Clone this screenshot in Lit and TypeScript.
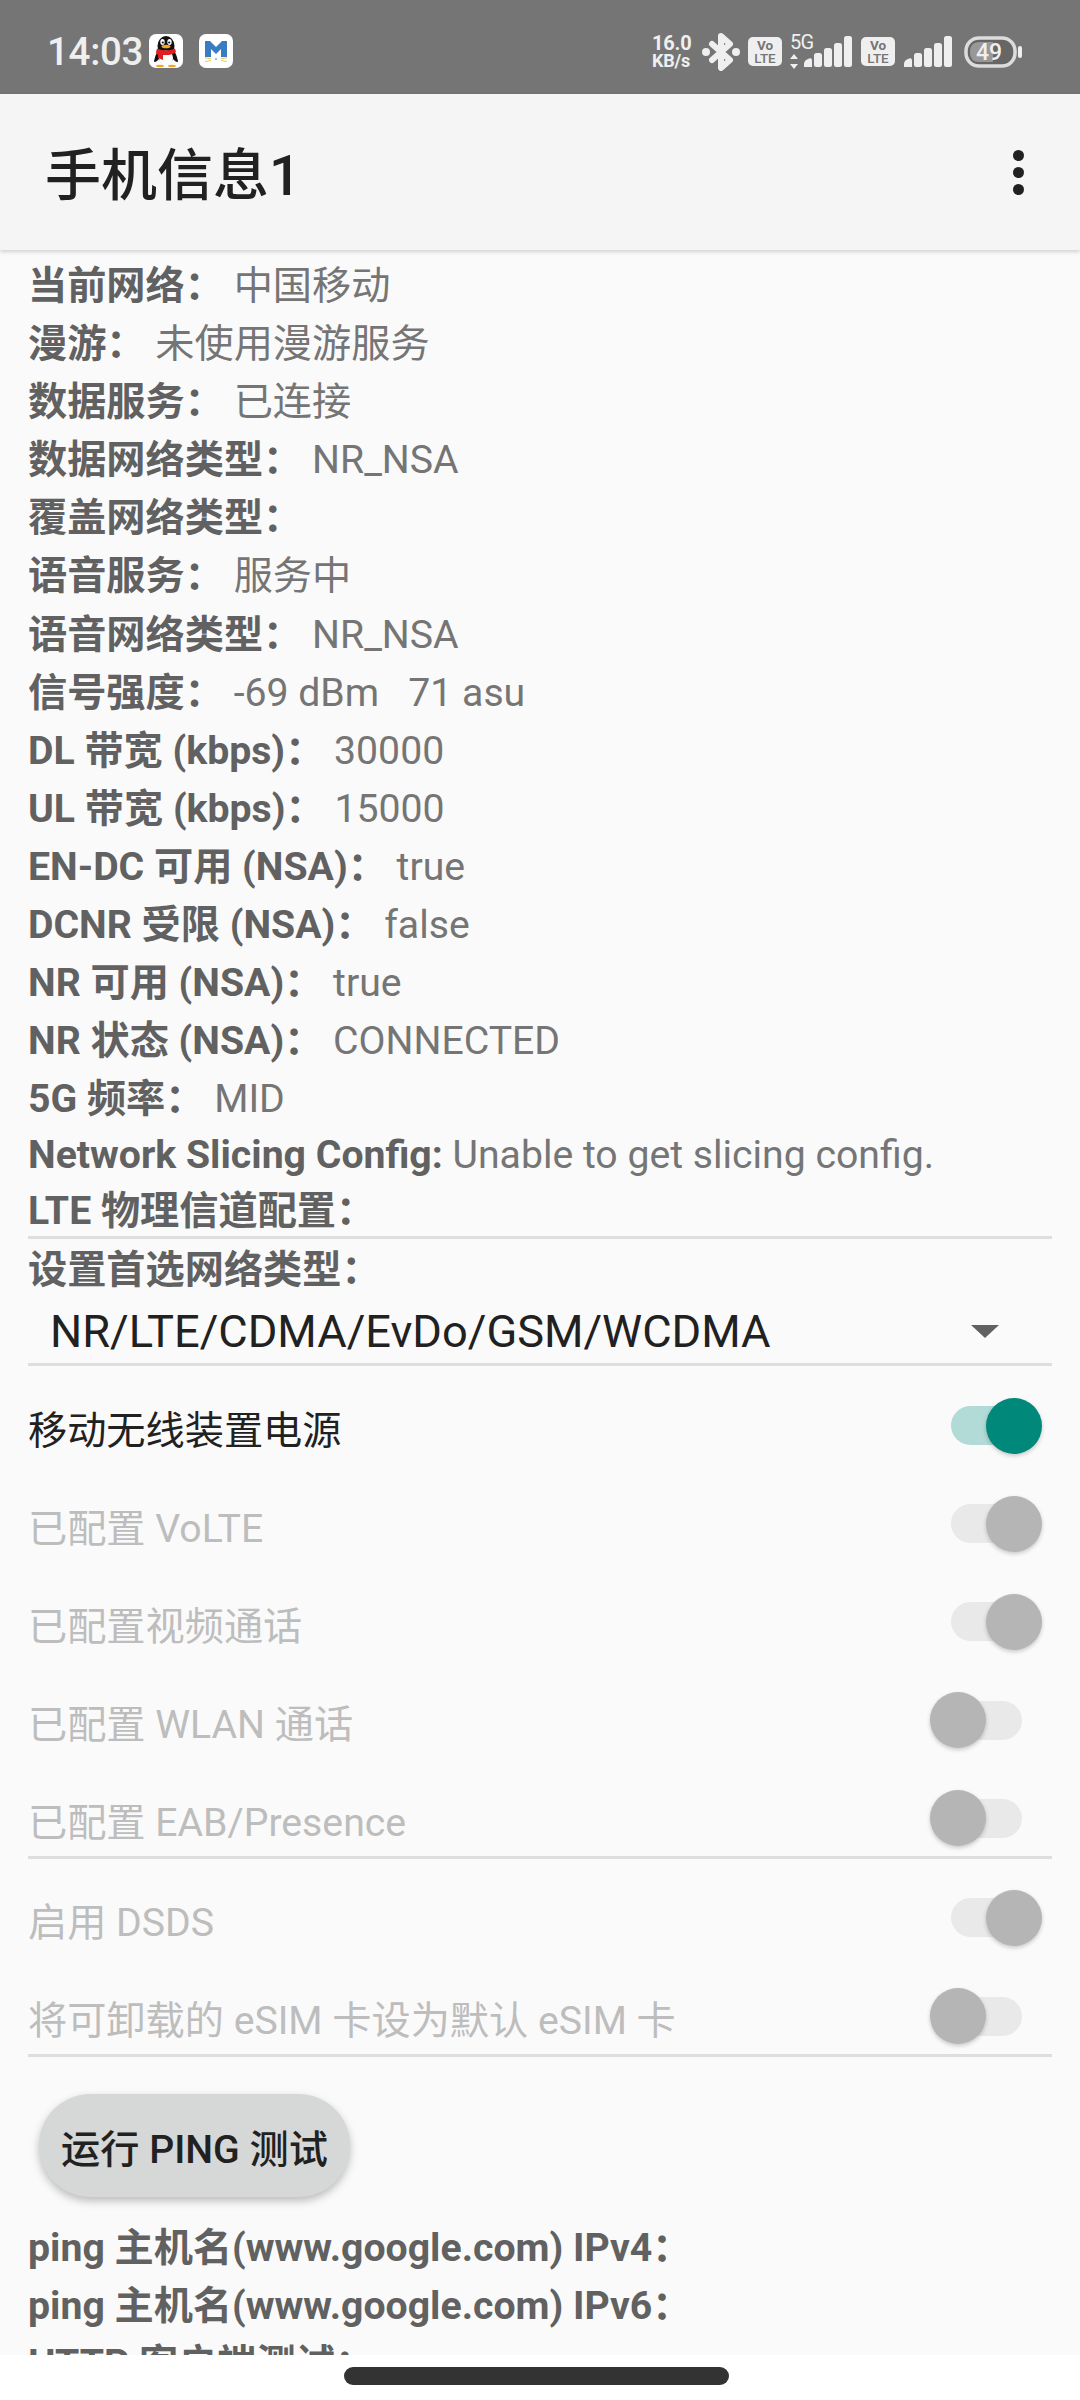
import { LitElement, html, css, svg } from "lit";
import { customElement } from "lit/decorators.js";

const INFO: [string, string][] = [
  ["当前网络：", "中国移动"],
  ["漫游：", "未使用漫游服务"],
  ["数据服务：", "已连接"],
  ["数据网络类型：", "NR_NSA"],
  ["覆盖网络类型：", ""],
  ["语音服务：", "服务中"],
  ["语音网络类型：", "NR_NSA"],
  ["信号强度：", "-69 dBm   71 asu"],
  ["DL 带宽 (kbps)：", "30000"],
  ["UL 带宽 (kbps)：", "15000"],
  ["EN-DC 可用 (NSA)：", "true"],
  ["DCNR 受限 (NSA)：", "false"],
  ["NR 可用 (NSA)：", "true"],
  ["NR 状态 (NSA)：", "CONNECTED"],
  ["5G 频率：", "MID"],
];

const volte = html`<svg class="volte" width="34" height="29" viewBox="0 0 34 29">
  <rect width="34" height="29" rx="5" fill="#efefef"></rect>
  <text x="17" y="13" text-anchor="middle" font-size="13.500" font-weight="700" fill="#757575" font-family="Roboto">Vo</text>
  <text x="17" y="26" text-anchor="middle" font-size="13.500" font-weight="500" fill="#757575" font-family="Roboto">LTE</text>
</svg>`;

const bars = svg`
  <path d="M0 31v-3q0-3 3-4.500l2-1q3-1 3 2v6.500z" fill="#efefef"></path>
  <rect x="10" y="17" width="8" height="14" rx="2.500" fill="#efefef"></rect>
  <rect x="20" y="12" width="8" height="19" rx="2.500" fill="#efefef"></rect>
  <rect x="30" y="7" width="8" height="24" rx="2.500" fill="#efefef"></rect>
  <rect x="40" y="0" width="8" height="31" rx="2.500" fill="#efefef"></rect>`;

@customElement("app-root")
export class AppRoot extends LitElement {
  static styles = css`
    :host {
      display: block;
      width: 1080px;
      height: 2400px;
      overflow: hidden;
      background: #fafafa;
      font-family: Roboto, "Noto Sans CJK SC", sans-serif;
    }
    .page { display: flex; flex-direction: column; height: 2400px; }
    .status {
      height: 94px;
      flex: none;
      background: #757575;
      display: flex;
      align-items: center;
      padding-left: 47px;
      color: #efefef;
    }
    .time { font-size: 38.5px; font-weight: 500; width: 102px; line-height: 1; letter-spacing: -.3px; margin-top: 10px; }
    .app { display: block; margin-top: 8px; }
    .app.m { margin-left: 16px; }
    .cluster { margin-left: auto; display: flex; align-items: center; margin-right: 58px; margin-top: 9px; }
    .speed { width: 44px; margin-right: 6px; display: flex; flex-direction: column; align-items: flex-start; font-weight: 700; }
    .speed .a { font-size: 20px; height: 18px; line-height: 18px; letter-spacing: -.2px; }
    .speed .b { font-size: 18px; height: 18px; line-height: 18px; letter-spacing: -.2px; }
    .bt { margin-right: 8px; }
    .g5 { margin-left: 8px; margin-right: -12px; }
    .sig.two { margin-left: 9px; }
    .vwrap { display: flex; margin-left: 9px; }
    .batt { margin-left: 12px; }
    .bar {
      height: 156px;
      flex: none;
      background: #f5f5f5;
      box-shadow: 0 2px 4px rgba(0, 0, 0, .16);
      display: flex;
      align-items: center;
      justify-content: space-between;
      padding: 0 56px 0 45px;
      color: #212121;
      position: relative;
      z-index: 1;
    }
    .title { font-size: 56px; line-height: 1; font-weight: 500; margin-top: 8px; }
    .dots { display: flex; flex-direction: column; gap: 6px; }
    .dots i { width: 11px; height: 11px; border-radius: 50%; background: #212121; display: block; }
    .content { flex: 1; min-height: 0; overflow: hidden; padding: 7px 28px 0 28px; }
    .row { font-size: 39.2px; line-height: 58.1px; height: 58.1px; color: #757575; white-space: pre; }
    .row b { font-weight: 700; color: #616161; }
    .row.slice { height: 54px; line-height: 54px; }
    .row.label { font-weight: 700; color: #616161; }
    .row.lte { height: 53.5px; }
    .row.pref { height: 58px; line-height: 62px; }
    .divider { height: 3px; background: #dedede; }
    .spinner { height: 62px; padding: 4px 53px 0 22px; display: flex; align-items: center; justify-content: space-between; font-size: 45.2px; color: #212121; }
    .t {
      height: 98.2px;
      display: flex;
      align-items: center;
      justify-content: space-between;
      font-size: 39.2px;
      color: #bdbdbd;
    }
    .t.on { color: #212121; }
    .t span { margin-top: 2px; }
    .first { margin-top: 10.5px; }
    .tight { margin-bottom: -11.5px; }
    .after { margin-top: 10px; }
    .sw { width: 113px; height: 56px; display: flex; align-items: center; margin-right: 10px; flex: none; }
    .sw .track { width: 71px; height: 39px; border-radius: 20px; background: #e9e9e9; margin-left: 22px; flex: none; }
    .sw .thumb { width: 56px; height: 56px; border-radius: 50%; background: #b5b5b5; margin-left: -92px; flex: none; box-shadow: 0 2px 4px rgba(0, 0, 0, .2); position: relative; }
    .sw.right .thumb { margin-left: -36px; }
    .t.on .track { background: #b2dad6; }
    .t.on .thumb { background: #00897b; }
    .btn {
      margin: 37.5px 0 21.5px 11px;
      width: 311px;
      height: 103px;
      border-radius: 52px;
      background: #d6d7d7;
      box-shadow: 0 4px 8px rgba(0, 0, 0, .25);
      display: flex;
      align-items: center;
      justify-content: center;
      font-size: 39.2px;
      font-weight: 500;
      color: #212121;
    }
    .nav { height: 45px; flex: none; background: #fff; padding: 12px 0 0 344px; box-sizing: border-box; }
    .pill { width: 385px; height: 18px; border-radius: 9px; background: #333; }
  `;

  private toggle(label: string, right: boolean, cls = "") {
    return html`<div class="t ${cls}">
      <span>${label}</span>
      <div class="sw ${right ? "right" : ""}"><div class="track"></div><div class="thumb"></div></div>
    </div>`;
  }

  render() {
    return html`<div class="page">
      <div class="status">
        <div class="time">14:03</div>
        <svg class="app" width="34" height="34" viewBox="0 0 34 34">
          <rect width="34" height="34" rx="7" fill="#fff"></rect>
          <ellipse cx="17" cy="12" rx="8.500" ry="10" fill="#111"></ellipse>
          <path d="M9 16q-3 6-4 11 0 2 3 0l2-2q2 6 7 6t7-6l2 2q3 2 3 0-1-5-4-11z" fill="#111"></path>
          <ellipse cx="17" cy="24" rx="7" ry="7.500" fill="#fff"></ellipse>
          <path d="M8 14.500q9 4 18 0l1 3.500q-3 2.500-7 3H14v5l-5-2v-3q-2-1-2-3z" fill="#e02020"></path>
          <ellipse cx="13.500" cy="8" rx="2.200" ry="3" fill="#fff"></ellipse>
          <ellipse cx="20.500" cy="8" rx="2.200" ry="3" fill="#fff"></ellipse>
          <circle cx="13.800" cy="8.500" r="1.100" fill="#111"></circle>
          <circle cx="20.200" cy="8.500" r="1.100" fill="#111"></circle>
          <ellipse cx="17" cy="12.500" rx="4.500" ry="1.800" fill="#f5a623"></ellipse>
          <ellipse cx="11" cy="32" rx="4" ry="1.200" fill="#f5a623"></ellipse>
          <ellipse cx="23" cy="32" rx="4" ry="1.200" fill="#f5a623"></ellipse>
        </svg>
        <svg class="app m" width="34" height="34" viewBox="0 0 34 34">
          <rect width="34" height="34" rx="7" fill="#fff"></rect>
          <path d="M6 7h5l6 6 6-6h5v16h-6v-8l-5 5-5-5v8H6z" fill="#3a7cc4"></path>
          <path d="M6 24l6 .5M6 27.500l6-1M22 24.500l6-.5M22 26.500l6 1" stroke="#e8c860" stroke-width="1"></path>
          <circle cx="17" cy="25" r="1" fill="#8fa8d0"></circle>
        </svg>
        <div class="cluster">
          <div class="speed"><span class="a">16.0</span><span class="b">KB/s</span></div>
          <svg class="bt" width="38" height="38" viewBox="0 0 38 38">
            <path d="M10 11l18 16-9 8V3l9 8-18 16" fill="none" stroke="#efefef" stroke-width="6" stroke-linejoin="round" stroke-linecap="round"></path>
            <circle cx="4" cy="19" r="4" fill="#efefef"></circle>
            <circle cx="34" cy="19" r="4" fill="#efefef"></circle>
          </svg>
          ${volte}
          <svg class="g5" width="26" height="36" viewBox="0 0 26 36">
            <text x="0" y="15" font-size="20" fill="#efefef" font-family="Roboto" textLength="24">5G</text>
            <path d="M4 20l4 5H0zM4 35l4-5H0z" fill="#efefef"></path>
          </svg>
          <svg class="sig" width="48" height="31" viewBox="0 0 48 31">${bars}</svg>
          <span class="vwrap">${volte}</span>
          <svg class="sig two" width="48" height="31" viewBox="0 0 48 31">${bars}</svg>
          <svg class="batt" width="58" height="32" viewBox="0 0 58 32">
            <rect x="2" y="2" width="49" height="28" rx="13" fill="#666" stroke="#dcdcdc" stroke-width="3.500"></rect>
            <path d="M6 16q0-10 9-10h14v20H15q-9 0-9-10z" fill="#989898"></path>
            <rect x="54" y="10" width="4" height="12" rx="2" fill="#efefef"></rect>
            <text x="25" y="24" text-anchor="middle" font-size="23" font-weight="500" fill="#efefef" font-family="Roboto">49</text>
          </svg>
        </div>
      </div>
      <div class="bar">
        <div class="title">手机信息1</div>
        <div class="dots"><i></i><i></i><i></i></div>
      </div>
      <div class="content">
        ${INFO.map(([k, v]) => html`<div class="row"><b>${k}</b> ${v}</div>`)}
        <div class="row slice"><b>Network Slicing Config:</b> Unable to get slicing config.</div>
        <div class="row label lte">LTE 物理信道配置：</div>
        <div class="divider"></div>
        <div class="row label pref">设置首选网络类型：</div>
        <div class="spinner">
          <span>NR/LTE/CDMA/EvDo/GSM/WCDMA</span>
          <svg width="28" height="13" viewBox="0 0 28 13"><path d="M0 0h28L14 13z" fill="#616161"></path></svg>
        </div>
        <div class="divider"></div>
        ${this.toggle("移动无线装置电源", true, "on first")}
        ${this.toggle("已配置 VoLTE", true)}
        ${this.toggle("已配置视频通话", true)}
        ${this.toggle("已配置 WLAN 通话", false)}
        ${this.toggle("已配置 EAB/Presence", false, "tight")}
        <div class="divider"></div>
        ${this.toggle("启用 DSDS", true, "after")}
        ${this.toggle("将可卸载的 eSIM 卡设为默认 eSIM 卡", false, "tight")}
        <div class="divider"></div>
        <div class="btn">运行 PING 测试</div>
        <div class="row label">ping 主机名(www.google.com) IPv4：</div>
        <div class="row label">ping 主机名(www.google.com) IPv6：</div>
        <div class="row label">HTTP 客户端测试：</div>
      </div>
      <div class="nav"><div class="pill"></div></div>
    </div>`;
  }
}
